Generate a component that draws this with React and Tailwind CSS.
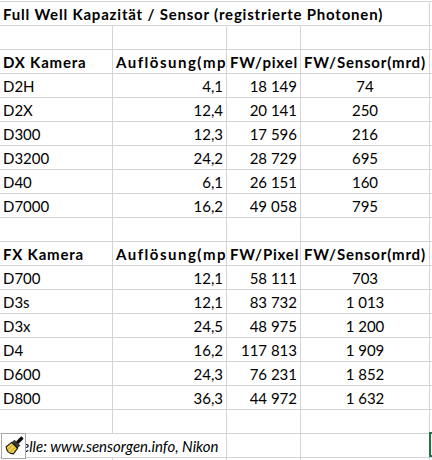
import React from "react";

const GRID = "grid grid-cols-[113px_114px_74px_129px_1fr]";
const LINE = "border-[#d4d4d4]";

function Cell({ children, align = "left", bold, border = true, span = "", wide }) {
  const al =
    align === "right" ? "justify-end" : align === "center" ? "justify-center" : "justify-start";
  return (
    <div
      className={`${span} flex ${al} items-start overflow-hidden whitespace-nowrap px-[3px] pt-[1px] leading-[22px] ${
        border ? "border-r " + LINE : ""
      } ${bold ? "font-bold" : ""} ${bold ? (wide ? "tracking-[1.5px]" : "tracking-[0.8px]") : ""}`}
    >
      {children}
    </div>
  );
}

function Row({ children }) {
  return <div className={`${GRID} h-[24px] border-t ${LINE}`}>{children}</div>;
}

function HeaderRow({ label, px }) {
  return (
    <Row>
      <Cell bold>{label}</Cell>
      <Cell bold wide>Auflösung(mp)</Cell>
      <Cell bold>{px}</Cell>
      <Cell bold>FW/Sensor(mrd)</Cell>
      <Cell border={false} />
    </Row>
  );
}

function DataRow({ r }) {
  return (
    <Row>
      <Cell>{r[0]}</Cell>
      <Cell align="right">{r[1]}</Cell>
      <Cell align="right">{r[2]}</Cell>
      <Cell align="center">{r[3]}</Cell>
      <Cell border={false} />
    </Row>
  );
}

function EmptyRow() {
  return (
    <Row>
      <Cell />
      <Cell />
      <Cell />
      <Cell />
      <Cell border={false} />
    </Row>
  );
}

const dx = [
  ["D2H", "4,1", "18 149", "74"],
  ["D2X", "12,4", "20 141", "250"],
  ["D300", "12,3", "17 596", "216"],
  ["D3200", "24,2", "28 729", "695"],
  ["D40", "6,1", "26 151", "160"],
  ["D7000", "16,2", "49 058", "795"],
];

const fx = [
  ["D700", "12,1", "58 111", "703"],
  ["D3s", "12,1", "83 732", "1 013"],
  ["D3x", "24,5", "48 975", "1 200"],
  ["D4", "16,2", "117 813", "1 909"],
  ["D600", "24,3", "76 231", "1 852"],
  ["D800", "36,3", "44 972", "1 632"],
];

function Brush() {
  return (
    <svg width="22" height="22" viewBox="0 0 20 20">
      <g transform="rotate(45 10 10)">
        <rect x="8.4" y="-1" width="3.2" height="7" rx="0.8" fill="#111" />
        <rect x="6.6" y="6" width="6.8" height="3.2" fill="#3a3a3a" stroke="#111" strokeWidth="0.8" />
        <path
          d="M6.2 9.2 H13.8 L14.6 15.5 Q10 19.5 5.4 15.5 Z"
          fill="#f0d24a"
          stroke="#111"
          strokeWidth="1"
        />
        <path d="M8.4 10 V16.5 M11.6 10 V16.5" stroke="#b89418" strokeWidth="0.8" />
      </g>
    </svg>
  );
}

export default function App() {
  return (
    <div
      className="relative w-[432px] h-[460px] overflow-hidden bg-white text-black text-[15px] pt-[1px]"
      style={{ fontFamily: "Lato, 'Liberation Sans', sans-serif" }}
    >
      <Row>
        <Cell bold span="col-span-4">
          <span>Full Well Kapazität / Sensor (registrierte Photonen)</span>
        </Cell>
        <Cell border={false} />
      </Row>
      <EmptyRow />
      <HeaderRow label="DX Kamera" px="FW/pixel" />
      {dx.map((r) => (
        <DataRow key={r[0]} r={r} />
      ))}
      <EmptyRow />
      <HeaderRow label="FX Kamera" px="FW/Pixel" />
      {fx.map((r) => (
        <DataRow key={r[0]} r={r} />
      ))}
      <EmptyRow />
      <Row>
        <Cell span="col-span-2">
          <span className="italic">Quelle: www.sensorgen.info, Nikon</span>
        </Cell>
        <Cell />
        <Cell />
        <Cell border={false} />
      </Row>
      <EmptyRow />

      <div className="absolute left-[429px] top-[432px] w-[12px] h-[25px] border-2 border-[#217346]" />
      <div className="absolute left-[1px] top-[433px] w-[25px] h-[26px] bg-white border border-[#a8a8a8] flex items-center justify-center">
        <Brush />
      </div>
    </div>
  );
}
